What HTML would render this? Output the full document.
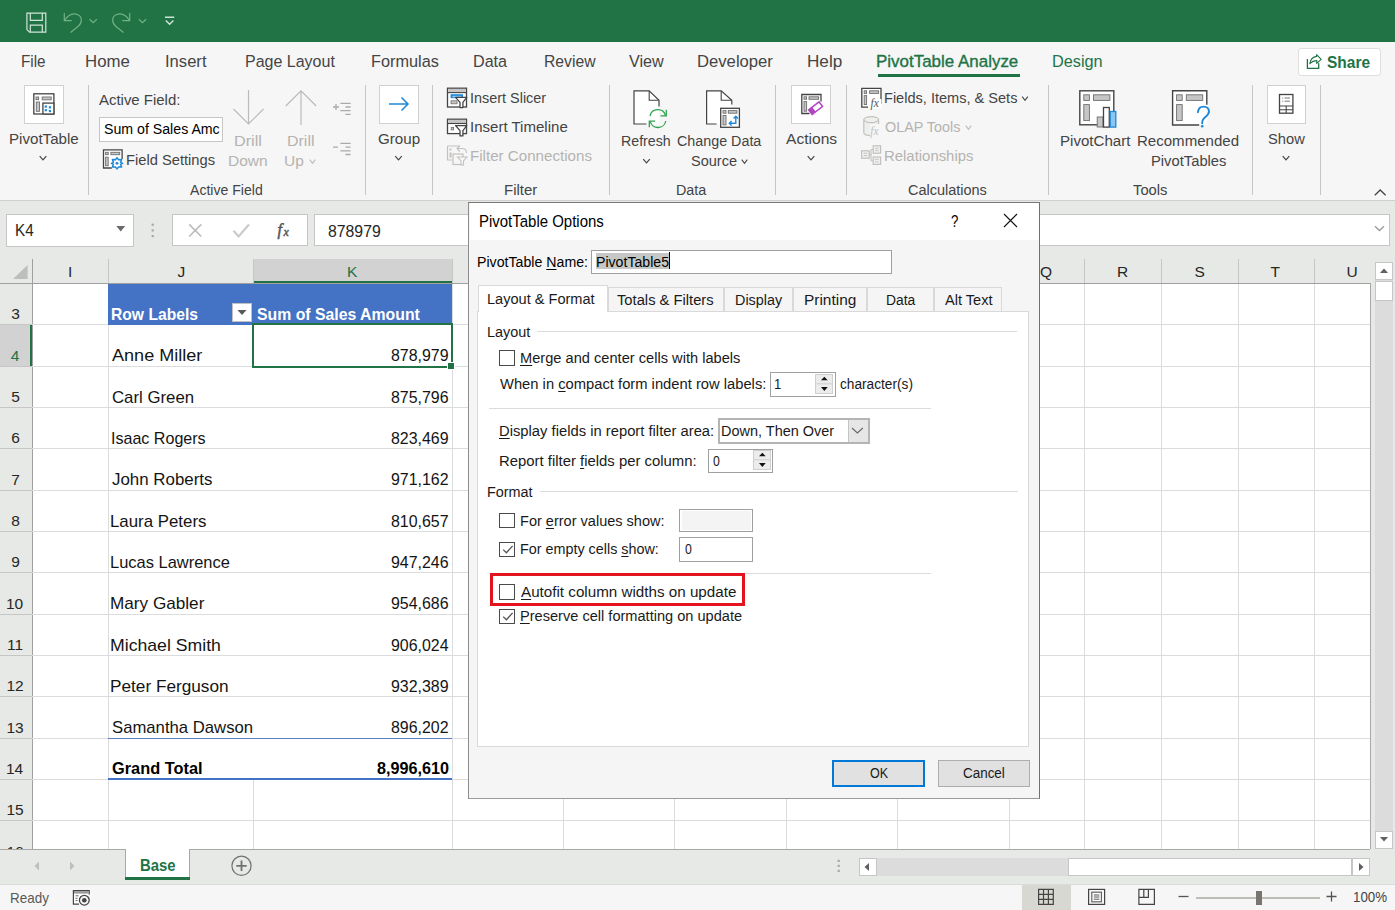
<!DOCTYPE html>
<html><head><meta charset="utf-8"><style>
html,body{margin:0;padding:0;}
body{width:1395px;height:910px;position:relative;overflow:hidden;background:#fff;font-family:'Liberation Sans', sans-serif;}
.t{position:absolute;white-space:nowrap;line-height:1;transform-origin:0 0;}
u{text-decoration:underline;text-decoration-thickness:1px;text-underline-offset:1.6px;}
#t0{left:20.58px !important;transform:scaleX(0.9242)}
#t1{left:85.48px !important;transform:scaleX(1.0170)}
#t2{left:165.20px !important;transform:scaleX(1.0045)}
#t3{left:244.53px !important;transform:scaleX(0.9690)}
#t4{left:370.51px !important;transform:scaleX(0.9856)}
#t5{left:473.32px !important;transform:scaleX(0.9769)}
#t6{left:543.55px !important;transform:scaleX(0.9526)}
#t7{left:629.00px !important;transform:scaleX(0.9783)}
#t8{left:697.49px !important;transform:scaleX(1.0083)}
#t9{left:807.46px !important;transform:scaleX(1.0372)}
#t10{left:876.47px !important;transform:scaleX(1.0263)}
#t11{left:1052.01px !important;transform:scaleX(0.9856)}
#t12{left:1327.00px !important;transform:scaleX(0.9544)}
#t13{left:190.20px !important;transform:scaleX(0.9437)}
#t14{left:503.90px !important;transform:scaleX(1.0034)}
#t15{left:676.14px !important;transform:scaleX(0.9609)}
#t16{left:907.80px !important;transform:scaleX(0.9700)}
#t17{left:1132.50px !important;transform:scaleX(0.9892)}
#t18{left:8.99px !important;transform:scaleX(1.0126)}
#t19{left:377.70px !important;transform:scaleX(1.0152)}
#t20{left:785.70px !important;transform:scaleX(1.0439)}
#t21{left:1267.50px !important;transform:scaleX(0.9853)}
#t22{left:98.80px !important;transform:scaleX(1.0010)}
#t23{left:103.50px !important;transform:scaleX(0.9491)}
#t24{left:125.52px !important;transform:scaleX(0.9849)}
#t25{left:234.21px !important;transform:scaleX(1.0872)}
#t26{left:228.16px !important;transform:scaleX(1.0393)}
#t27{left:287.03px !important;transform:scaleX(1.0707)}
#t28{left:284.46px !important;transform:scaleX(1.0407)}
#t29{left:469.83px !important;transform:scaleX(0.9665)}
#t30{left:469.79px !important;transform:scaleX(1.0073)}
#t31{left:469.79px !important;transform:scaleX(1.0143)}
#t32{left:621.35px !important;transform:scaleX(0.9519)}
#t33{left:677.10px !important;transform:scaleX(0.9590)}
#t34{left:690.80px !important;transform:scaleX(0.9727)}
#t35{left:884.02px !important;transform:scaleX(0.9751)}
#t36{left:885.00px !important;transform:scaleX(0.9639)}
#t37{left:884.00px !important;transform:scaleX(0.9986)}
#t38{left:1060.49px !important;transform:scaleX(1.0098)}
#t39{left:1137.29px !important;transform:scaleX(1.0081)}
#t40{left:1150.81px !important;transform:scaleX(0.9887)}
#t41{left:14.72px !important;transform:scaleX(0.9766)}
#t42{left:328.30px !important;transform:scaleX(1.0098)}
#t43{left:68.00px !important;transform:scaleX(1.0000)}
#t44{left:177.50px !important;transform:scaleX(1.0000)}
#t45{left:347.00px !important;transform:scaleX(1.0000)}
#t46{left:1040.00px !important;transform:scaleX(1.0000)}
#t47{left:1117.00px !important;transform:scaleX(1.0000)}
#t48{left:1194.50px !important;transform:scaleX(1.0000)}
#t49{left:1270.50px !important;transform:scaleX(1.0000)}
#t50{left:1346.50px !important;transform:scaleX(1.0000)}
#t51{left:11.20px !important;transform:scaleX(1.0000)}
#t52{left:10.70px !important;transform:scaleX(1.0000)}
#t53{left:11.20px !important;transform:scaleX(1.0000)}
#t54{left:11.20px !important;transform:scaleX(1.0000)}
#t55{left:11.20px !important;transform:scaleX(1.0000)}
#t56{left:11.20px !important;transform:scaleX(1.0000)}
#t57{left:11.20px !important;transform:scaleX(1.0000)}
#t58{left:5.89px !important;transform:scaleX(1.0000)}
#t59{left:6.97px !important;transform:scaleX(1.0000)}
#t60{left:6.39px !important;transform:scaleX(1.0000)}
#t61{left:6.39px !important;transform:scaleX(1.0000)}
#t62{left:5.89px !important;transform:scaleX(1.0000)}
#t63{left:6.39px !important;transform:scaleX(1.0000)}
#t64{left:6.39px !important;transform:scaleX(1.0000)}
#t65{left:111.03px !important;transform:scaleX(0.9652)}
#t66{left:257.00px !important;transform:scaleX(0.9750)}
#t67{left:111.50px !important;transform:scaleX(1.1046)}
#t68{left:391.00px !important;transform:scaleX(0.9740)}
#t69{left:111.50px !important;transform:scaleX(1.0262)}
#t70{left:391.00px !important;transform:scaleX(0.9740)}
#t71{left:110.52px !important;transform:scaleX(0.9821)}
#t72{left:391.00px !important;transform:scaleX(0.9740)}
#t73{left:111.50px !important;transform:scaleX(1.0327)}
#t74{left:391.00px !important;transform:scaleX(0.9740)}
#t75{left:110.47px !important;transform:scaleX(1.0293)}
#t76{left:391.00px !important;transform:scaleX(0.9740)}
#t77{left:110.49px !important;transform:scaleX(1.0065)}
#t78{left:391.00px !important;transform:scaleX(0.9740)}
#t79{left:110.45px !important;transform:scaleX(1.0485)}
#t80{left:391.00px !important;transform:scaleX(0.9740)}
#t81{left:110.42px !important;transform:scaleX(1.0794)}
#t82{left:391.00px !important;transform:scaleX(0.9740)}
#t83{left:110.45px !important;transform:scaleX(1.0514)}
#t84{left:391.00px !important;transform:scaleX(0.9740)}
#t85{left:111.50px !important;transform:scaleX(1.0208)}
#t86{left:391.00px !important;transform:scaleX(0.9740)}
#t87{left:111.50px !important;transform:scaleX(1.0079)}
#t88{left:376.50px !important;transform:scaleX(0.9982)}
#t89{left:140.04px !important;transform:scaleX(0.8563)}
#t90{left:9.89px !important;transform:scaleX(0.9102)}
#t91{left:1352.60px !important;transform:scaleX(0.9008)}
#t92{left:479.04px !important;transform:scaleX(0.9569)}
#t93{left:950.60px !important;transform:scaleX(0.7600)}
#t94{left:476.62px !important;transform:scaleX(0.9777)}
#t95{left:595.52px !important;transform:scaleX(0.9753)}
#t96{left:487.29px !important;transform:scaleX(1.0052)}
#t97{left:617.00px !important;transform:scaleX(1.0176)}
#t98{left:734.81px !important;transform:scaleX(0.9926)}
#t99{left:804.13px !important;transform:scaleX(1.0654)}
#t100{left:885.84px !important;transform:scaleX(0.9561)}
#t101{left:944.80px !important;transform:scaleX(1.0070)}
#t102{left:487.10px !important;transform:scaleX(0.9961)}
#t103{left:519.79px !important;transform:scaleX(1.0100)}
#t104{left:499.90px !important;transform:scaleX(1.0180)}
#t105{left:773.70px !important;transform:scaleX(0.9000)}
#t106{left:840.20px !important;transform:scaleX(0.9445)}
#t107{left:498.88px !important;transform:scaleX(1.0202)}
#t108{left:721.30px !important;transform:scaleX(0.9993)}
#t109{left:498.87px !important;transform:scaleX(1.0269)}
#t110{left:712.60px !important;transform:scaleX(0.8500)}
#t111{left:487.11px !important;transform:scaleX(0.9945)}
#t112{left:519.60px !important;transform:scaleX(1.0031)}
#t113{left:519.61px !important;transform:scaleX(0.9911)}
#t114{left:684.60px !important;transform:scaleX(0.8500)}
#t115{left:520.60px !important;transform:scaleX(1.0489)}
#t116{left:519.59px !important;transform:scaleX(1.0066)}
#t117{left:869.50px !important;transform:scaleX(0.8652)}
#t118{left:963.30px !important;transform:scaleX(0.9271)}
</style></head><body>
<div style="position:absolute;left:0px;top:0px;width:1395px;height:42px;background:#217346"></div>
<div style="position:absolute;left:0px;top:42px;width:1395px;height:159px;background:#f6f6f6"></div>
<div style="position:absolute;left:0px;top:200px;width:1395px;height:1px;background:#d2d0ce"></div>
<div id="t0" class="t" style="left:21.50px;top:54.16px;font-size:16.52px;color:#444444;font-weight:normal;">File</div>
<div id="t1" class="t" style="left:86.50px;top:54.16px;font-size:16.52px;color:#444444;font-weight:normal;">Home</div>
<div id="t2" class="t" style="left:166.20px;top:54.16px;font-size:16.52px;color:#444444;font-weight:normal;">Insert</div>
<div id="t3" class="t" style="left:245.50px;top:54.16px;font-size:16.52px;color:#444444;font-weight:normal;">Page Layout</div>
<div id="t4" class="t" style="left:371.50px;top:54.16px;font-size:16.52px;color:#444444;font-weight:normal;">Formulas</div>
<div id="t5" class="t" style="left:474.30px;top:54.16px;font-size:16.52px;color:#444444;font-weight:normal;">Data</div>
<div id="t6" class="t" style="left:544.50px;top:54.16px;font-size:16.52px;color:#444444;font-weight:normal;">Review</div>
<div id="t7" class="t" style="left:629.00px;top:54.16px;font-size:16.52px;color:#444444;font-weight:normal;">View</div>
<div id="t8" class="t" style="left:698.50px;top:54.16px;font-size:16.52px;color:#444444;font-weight:normal;">Developer</div>
<div id="t9" class="t" style="left:808.50px;top:54.16px;font-size:16.52px;color:#444444;font-weight:normal;">Help</div>
<div id="t10" class="t" style="left:877.50px;top:54.16px;font-size:16.52px;color:#217346;font-weight:normal;-webkit-text-stroke:0.35px #217346;">PivotTable Analyze</div>
<div style="position:absolute;left:877.6px;top:74.3px;width:142.7px;height:3px;background:#217346"></div>
<div id="t11" class="t" style="left:1053.00px;top:54.16px;font-size:16.52px;color:#217346;font-weight:normal;">Design</div>
<div style="position:absolute;left:1297.5px;top:47.5px;width:83.5px;height:28px;background:#fff;border:1px solid #e1dfdd;border-radius:3px;box-sizing:border-box"></div>
<div id="t12" class="t" style="left:1327.00px;top:54.00px;font-size:16.23px;color:#217346;font-weight:bold;">Share</div>
<div style="position:absolute;left:87.9px;top:85px;width:1px;height:110px;background:#c8c6c4"></div>
<div style="position:absolute;left:364.5px;top:85px;width:1px;height:110px;background:#c8c6c4"></div>
<div style="position:absolute;left:432.2px;top:85px;width:1px;height:110px;background:#c8c6c4"></div>
<div style="position:absolute;left:608.5px;top:85px;width:1px;height:110px;background:#c8c6c4"></div>
<div style="position:absolute;left:775.0px;top:85px;width:1px;height:110px;background:#c8c6c4"></div>
<div style="position:absolute;left:846.4px;top:85px;width:1px;height:110px;background:#c8c6c4"></div>
<div style="position:absolute;left:1048.0px;top:85px;width:1px;height:110px;background:#c8c6c4"></div>
<div style="position:absolute;left:1252.4px;top:85px;width:1px;height:110px;background:#c8c6c4"></div>
<div style="position:absolute;left:1319.5px;top:85px;width:1px;height:110px;background:#c8c6c4"></div>
<div id="t13" class="t" style="left:190.20px;top:182.61px;font-size:14.93px;color:#444444;font-weight:normal;">Active Field</div>
<div id="t14" class="t" style="left:504.90px;top:182.61px;font-size:14.93px;color:#444444;font-weight:normal;">Filter</div>
<div id="t15" class="t" style="left:677.10px;top:182.61px;font-size:14.93px;color:#444444;font-weight:normal;">Data</div>
<div id="t16" class="t" style="left:907.80px;top:182.61px;font-size:14.93px;color:#444444;font-weight:normal;">Calculations</div>
<div id="t17" class="t" style="left:1132.50px;top:182.61px;font-size:14.93px;color:#444444;font-weight:normal;">Tools</div>
<div style="position:absolute;left:24.1px;top:85.3px;width:39.699999999999996px;height:38.3px;background:#fff;border:1px solid #d2d0ce;box-sizing:border-box"></div>
<div style="position:absolute;left:379px;top:85.3px;width:40.19999999999999px;height:38.3px;background:#fff;border:1px solid #d2d0ce;box-sizing:border-box"></div>
<div style="position:absolute;left:791.3px;top:85.3px;width:39.700000000000045px;height:38.3px;background:#fff;border:1px solid #d2d0ce;box-sizing:border-box"></div>
<div style="position:absolute;left:1267.2px;top:85.3px;width:39.200000000000045px;height:38.3px;background:#fff;border:1px solid #d2d0ce;box-sizing:border-box"></div>
<svg style="position:absolute;left:0;top:0" width="1395" height="210" viewBox="0 0 1395 210"><path d="M26.9 13.1 H45.8 V32.2 H29.5 L26.9 29.6 Z" fill="none" stroke="#cfe5d6" stroke-width="1.2"/><path d="M30.3 13.1 V20.3 H42.3 V13.1 M30.3 32.2 V25.2 H42.3 V32.2" fill="none" stroke="#cfe5d6" stroke-width="1.2"/><path d="M64.3 13 V20.6 H71.6 M64.6 20.3 C68 15 73 12.8 77.5 14.5 C83 17 82 23.5 78 26.5 L70.5 32.5" fill="none" stroke="#6fb285" stroke-width="1.2"/><path d="M89.6 19.2 L93.2 22.6 L96.8 19.2" fill="none" stroke="#6fb285" stroke-width="1.2"/><path d="M129.7 13 V20.6 H122.4 M129.4 20.3 C126 15 121 12.8 116.5 14.5 C111 17 112 23.5 116 26.5 L123.5 32.5" fill="none" stroke="#6fb285" stroke-width="1.2"/><path d="M138.9 19.2 L142.5 22.6 L146.1 19.2" fill="none" stroke="#6fb285" stroke-width="1.2"/><path d="M165 17.3 H174.2 M165.8 20.5 L169.6 24.3 L173.4 20.5" fill="none" stroke="#cfe5d6" stroke-width="1.4"/><rect x="33.8" y="93.8" width="20.1" height="20.2" fill="#fff" stroke="#444444" stroke-width="1.3"/><rect x="36" y="97" width="2.6" height="2.6" fill="#c8c6c4" stroke="#6e6e6e" stroke-width="0.9"/><rect x="42.2" y="97" width="9" height="2.8" fill="#c8c6c4" stroke="#6e6e6e" stroke-width="0.9"/><rect x="36.3" y="102" width="3.2" height="9.3" fill="#c8c6c4" stroke="#6e6e6e" stroke-width="0.9"/><rect x="42.9" y="103.1" width="11" height="10.9" fill="#fff" stroke="#444444" stroke-width="1.3"/><rect x="44.699999999999996" y="105.5" width="2.2" height="2.2" fill="#1e88d8"/><rect x="48.8" y="106.2" width="2.2" height="2.2" fill="#1e88d8"/><rect x="44.699999999999996" y="109.10000000000001" width="2.2" height="2.2" fill="#1e88d8"/><rect x="48.8" y="109.9" width="2.2" height="2.2" fill="#1e88d8"/><path d="M122.1 159 V149.8 H103.5 V168 H111.8" fill="#fff" stroke="#444444" stroke-width="1.3"/><rect x="105.6" y="152.3" width="2.6" height="2.4" fill="#c8c6c4" stroke="#6e6e6e" stroke-width="0.9"/><rect x="110.9" y="152.3" width="8.8" height="2.4" fill="#c8c6c4" stroke="#6e6e6e" stroke-width="0.9"/><rect x="105.6" y="157.2" width="2.6" height="8.6" fill="#c8c6c4" stroke="#6e6e6e" stroke-width="0.9"/><g transform="translate(117,163.3)"><path d="M0 -5.6 L1.6 -3.6 L4.6 -3.8 L3.6 -1 L5.6 0 L3.6 1 L4.6 3.8 L1.6 3.6 L0 5.6 L-1.6 3.6 L-4.6 3.8 L-3.6 1 L-5.6 0 L-3.6 -1 L-4.6 -3.8 L-1.6 -3.6 Z" fill="#fff" stroke="#1e88d8" stroke-width="1.5" stroke-linejoin="round"/><circle r="1.4" fill="#1e88d8"/></g><path d="M248.5 90 V124 M233.5 109 L248.5 124 L263.5 109" fill="none" stroke="#bdbbb9" stroke-width="1.2"/><path d="M301 90.5 V125 M285.8 106 L301 90.8 L316.2 106" fill="none" stroke="#bdbbb9" stroke-width="1.2"/><path d="M333 107 H339 M336 104 V110 M340.4 103.3 H350.6 M345.5 107 H350.6 M340.4 110.7 H350.6 M345.5 114.4 H350.6" fill="none" stroke="#aaaaa8" stroke-width="1.3"/><path d="M333 147.1 H338 M340.4 143.4 H350.6 M345.5 147.1 H350.6 M340.4 150.9 H350.6 M345.5 154.5 H350.6" fill="none" stroke="#aaaaa8" stroke-width="1.3"/><path d="M39.7 156.2 L43 159.8 L46.3 156.2" fill="none" stroke="#444" stroke-width="1.2"/><path d="M395.2 156.2 L398.5 159.8 L401.8 156.2" fill="none" stroke="#444" stroke-width="1.2"/><path d="M807.7 156.2 L811 159.8 L814.3 156.2" fill="none" stroke="#444" stroke-width="1.2"/><path d="M1282.7 156.2 L1286 159.8 L1289.3 156.2" fill="none" stroke="#444" stroke-width="1.2"/><path d="M643.2 159.2 L646.5 162.8 L649.8 159.2" fill="none" stroke="#444" stroke-width="1.2"/><path d="M309.7 159.7 L312.5 163.3 L315.3 159.7" fill="none" stroke="#bdbbb9" stroke-width="1.1"/><path d="M741.7 159.7 L744.5 163.3 L747.3 159.7" fill="none" stroke="#444" stroke-width="1.1"/><path d="M1022.2 96.7 L1025 100.3 L1027.8 96.7" fill="none" stroke="#444" stroke-width="1.1"/><path d="M965.7 125.7 L968.5 129.3 L971.3 125.7" fill="none" stroke="#bdbbb9" stroke-width="1.1"/><path d="M389 104 H408 M401.5 97.5 L408 104 L401.5 110.5" fill="none" stroke="#1e88d8" stroke-width="1.5"/><rect x="447.5" y="88.2" width="19" height="18.8" fill="#fff" stroke="#444444" stroke-width="1.3"/><rect x="448.2" y="88.9" width="17.6" height="3.4" fill="#c8c6c4" stroke="none"/><path d="M447.5 92.6 H466.5" stroke="#444444" stroke-width="1.1"/><rect x="450.6" y="94.2" width="12.4" height="4" fill="#1e88d8"/><rect x="452.4" y="95.8" width="9" height="1.6" fill="#8cc4ee"/><rect x="451" y="100.8" width="6" height="3" fill="#c8c6c4" stroke="#6e6e6e" stroke-width="0.8"/><path d="M455.6 97.4 H466.8 L462.9 102.4 V107.6 H460 V102.4 Z" fill="#fff" stroke="#444444" stroke-width="1.3" stroke-linejoin="round"/><rect x="447.5" y="119.2" width="19" height="14.4" fill="#fff" stroke="#444444" stroke-width="1.3"/><rect x="448.2" y="119.9" width="17.6" height="3.4" fill="#c8c6c4"/><path d="M447.5 123.5 H466.5" stroke="#444444" stroke-width="1.1"/><rect x="451.2" y="127.5" width="2.4" height="2.4" fill="#c8c6c4" stroke="#6e6e6e" stroke-width="0.8"/><path d="M455.6 125.6 H466.8 L462.9 130.6 V135.9 H460 V130.6 Z" fill="#fff" stroke="#444444" stroke-width="1.3" stroke-linejoin="round"/><path d="M447.5 146 H459 M447.5 146 V160 H452" fill="none" stroke="#c3c1bf" stroke-width="1.2"/><rect x="449.5" y="148.5" width="2" height="2" fill="#c3c1bf"/><rect x="449.5" y="152.5" width="2" height="5" fill="#c3c1bf"/><path d="M460 145.5 L457 148.5 L460 151.5 M457.5 148.5 H462 C465 148.5 466.5 150.5 466.5 153" fill="none" stroke="#c3c1bf" stroke-width="1.1"/><rect x="453" y="154" width="10" height="10.5" fill="#f6f6f6" stroke="#c3c1bf" stroke-width="1.2"/><path d="M457.5 157 H467 L463.5 161 V165 H461 V161 Z" fill="#f6f6f6" stroke="#c3c1bf" stroke-width="1.1"/><path d="M634 90.9 H649.2 L659 100.2 V124 H634 Z" fill="#fff" stroke="none"/><path d="M646.5 124 H634 V90.9 H649.2 L659 100.2 V106.6" fill="none" stroke="#444444" stroke-width="1.2"/><path d="M649.2 90.9 V100.2 H659" fill="none" stroke="#444444" stroke-width="1.1"/><path d="M650 116 A8 8 0 0 1 665.5 115.5 M665.8 121 A8 8 0 0 1 650.2 121.5" fill="none" stroke="#2ea44f" stroke-width="1.3"/><path d="M666.3 109.8 V115.8 H660.5 M649.3 127.3 V121.2 H655.2" fill="none" stroke="#2ea44f" stroke-width="1.3"/><path d="M706.6 90.9 H721.2 L731.8 100.2 V124 H706.6 Z" fill="#fff" stroke="none"/><path d="M716.6 124 H706.6 V90.9 H721.2 L731.8 100.2 V104.5" fill="none" stroke="#444444" stroke-width="1.2"/><path d="M721.2 90.9 V100.2 H731.8" fill="none" stroke="#444444" stroke-width="1.1"/><rect x="720.7" y="108.3" width="18.7" height="19" fill="#fff" stroke="#444444" stroke-width="1.3"/><rect x="723" y="110.6" width="3" height="2.6" fill="#c8c6c4" stroke="#6e6e6e" stroke-width="0.9"/><rect x="728.3" y="110.6" width="8.6" height="2.6" fill="#c8c6c4" stroke="#6e6e6e" stroke-width="0.9"/><rect x="723" y="115.5" width="3" height="9.4" fill="#c8c6c4" stroke="#6e6e6e" stroke-width="0.9"/><path d="M735.8 116.5 V123.2 H729.5 M733.6 118.6 L735.8 116.3 L738 118.6 M731.6 121 L729.3 123.2 L731.6 125.4" fill="none" stroke="#1e88d8" stroke-width="1.4"/><path d="M821 101.5 V94.5 H801.8 V113.5 H809.5" fill="#fff" stroke="#444444" stroke-width="1.3"/><rect x="804" y="96.8" width="2.6" height="2.5" fill="#c8c6c4" stroke="#6e6e6e" stroke-width="0.9"/><rect x="809" y="96.8" width="9.6" height="2.5" fill="#c8c6c4" stroke="#6e6e6e" stroke-width="0.9"/><rect x="804" y="101.6" width="2.6" height="9.6" fill="#c8c6c4" stroke="#6e6e6e" stroke-width="0.9"/><g transform="translate(815.6,108.2) rotate(-38)"><rect x="-6.6" y="-2.9" width="13.2" height="5.8" fill="#fff" stroke="#b146c2" stroke-width="1.5"/><rect x="-6.6" y="-2.9" width="4.6" height="5.8" fill="#b146c2"/></g><path d="M881 104 V88.4 H861.8 V107.2 H868" fill="#fff" stroke="#444444" stroke-width="1.3"/><rect x="864.2" y="90.8" width="2.4" height="2.6" fill="#c8c6c4" stroke="#6e6e6e" stroke-width="0.9"/><rect x="869.6" y="90.8" width="9" height="2.6" fill="#c8c6c4" stroke="#6e6e6e" stroke-width="0.9"/><rect x="864.2" y="95.6" width="2.4" height="9" fill="#c8c6c4" stroke="#6e6e6e" stroke-width="0.9"/><rect x="869" y="99" width="12.5" height="9.5" fill="#fff"/><text x="870.5" y="106.8" font-family="Liberation Serif" font-style="italic" font-size="11.5" fill="#555">fx</text><path d="M863.8 119.6 V132.5 C863.8 136.6 878.6 136.6 878.6 132.5 V119.6" fill="#eef0ee" stroke="#c3c1bf" stroke-width="1.2"/><ellipse cx="871.2" cy="119.6" rx="7.4" ry="3" fill="#eef0ee" stroke="#c3c1bf" stroke-width="1.2"/><rect x="870" y="124" width="12" height="13" fill="#f6f6f6"/><text x="870.3" y="135" font-family="Liberation Serif" font-style="italic" font-size="11.5" fill="#c3c1bf">fx</text><rect x="861.6" y="150.8" width="7.6" height="7.4" fill="#eef0ee" stroke="#c3c1bf" stroke-width="1.2"/><rect x="873.2" y="145.8" width="7.4" height="7.4" fill="#eef0ee" stroke="#c3c1bf" stroke-width="1.2"/><rect x="873.2" y="157" width="7.4" height="7.4" fill="#eef0ee" stroke="#c3c1bf" stroke-width="1.2"/><path d="M863.6 153.2 H867.2 M863.6 155.6 H867.2 M875.2 148.3 H878.6 M875.2 150.6 H878.6 M875.2 159.4 H878.6 M875.2 161.8 H878.6" stroke="#c3c1bf" stroke-width="0.9"/><path d="M869.2 154.5 H871 M871 149.5 V160.7 M871 149.5 H873.2 M871 160.7 H873.2" fill="none" stroke="#c3c1bf" stroke-width="1.1"/><rect x="1079.8" y="90.8" width="34" height="34" fill="#fff" stroke="#444444" stroke-width="1.4"/><rect x="1083.8" y="94.8" width="5.6" height="5.6" fill="#c8c6c4" stroke="#6e6e6e" stroke-width="0.9"/><rect x="1093.5" y="94.8" width="16.4" height="5.6" fill="#c8c6c4" stroke="#6e6e6e" stroke-width="0.9"/><rect x="1083.8" y="104.6" width="5.6" height="16" fill="#c8c6c4" stroke="#6e6e6e" stroke-width="0.9"/><rect x="1097.2" y="117" width="5.8" height="10" fill="#c8c6c4" stroke="#6e6e6e" stroke-width="0.9"/><rect x="1103.5" y="107.5" width="5.8" height="19.6" fill="#fff" stroke="#444444" stroke-width="1.3"/><rect x="1110.2" y="111.5" width="5.6" height="15.6" fill="#8ec5f0" stroke="#1e88d8" stroke-width="1.3"/><rect x="1172.6" y="90.8" width="34.2" height="34.2" fill="#fff"/><path d="M1206.8 104.8 V90.8 H1172.6 V125 H1199.2" fill="none" stroke="#444444" stroke-width="1.4"/><rect x="1176.6" y="94.8" width="5.6" height="5.6" fill="#c8c6c4" stroke="#6e6e6e" stroke-width="0.9"/><rect x="1186.3" y="94.8" width="16.4" height="5.6" fill="#c8c6c4" stroke="#6e6e6e" stroke-width="0.9"/><rect x="1176.6" y="104.6" width="5.6" height="16" fill="#c8c6c4" stroke="#6e6e6e" stroke-width="0.9"/><path d="M1197.9 112.2 C1198.3 108.3 1200.8 106.6 1203.6 106.6 C1206.8 106.6 1209 108.8 1209 111.6 C1209 114.6 1206.5 116 1204.4 117.8 C1202.9 119.1 1202.2 120.5 1202.2 123.4" fill="none" stroke="#1e88d8" stroke-width="1.9" stroke-linecap="round"/><circle cx="1202.2" cy="126.3" r="1.3" fill="#1e88d8"/><rect x="1279.5" y="94.5" width="13.4" height="18.7" fill="#fff" stroke="#444444" stroke-width="1.3"/><path d="M1279.5 106 H1293 M1279.5 109.7 H1293 M1286.2 106 V113" stroke="#444444" stroke-width="1.1"/><path d="M1282.3 98 H1283.3 M1284.6 98 H1290 M1282.3 101.2 H1283.3 M1284.6 101.2 H1290" stroke="#777" stroke-width="1"/><path d="M1374.8 195.3 L1380.2 190 L1385.6 195.3" fill="none" stroke="#444" stroke-width="1.3"/><path d="M1307.4 59 V68.3 H1318.7 V63.2" fill="none" stroke="#217346" stroke-width="1.3"/><path d="M1309.8 63.6 C1310.6 59 1313.2 56.8 1316.6 56.4 V54.6 L1321.2 59.4 L1316.8 63.4 V60.6 C1314.2 60.4 1312 61.4 1309.8 63.6 Z" fill="none" stroke="#217346" stroke-width="1.1" stroke-linejoin="round"/></svg>
<div id="t18" class="t" style="left:10.00px;top:131.61px;font-size:14.93px;color:#444444;font-weight:normal;">PivotTable</div>
<div id="t19" class="t" style="left:377.70px;top:131.61px;font-size:14.93px;color:#444444;font-weight:normal;">Group</div>
<div id="t20" class="t" style="left:785.70px;top:131.61px;font-size:14.93px;color:#444444;font-weight:normal;">Actions</div>
<div id="t21" class="t" style="left:1267.50px;top:131.61px;font-size:14.93px;color:#444444;font-weight:normal;">Show</div>
<div id="t22" class="t" style="left:98.80px;top:92.91px;font-size:14.93px;color:#444444;font-weight:normal;">Active Field:</div>
<div style="position:absolute;left:99.3px;top:116.5px;width:123.7px;height:25.8px;background:#fff;border:1px solid #c8c6c4;box-sizing:border-box"></div>
<div id="t23" class="t" style="left:103.50px;top:122.31px;font-size:14.93px;color:#000;font-weight:normal;">Sum of Sales Amc</div>
<div id="t24" class="t" style="left:126.50px;top:152.71px;font-size:14.93px;color:#444444;font-weight:normal;">Field Settings</div>
<div id="t25" class="t" style="left:235.30px;top:133.71px;font-size:14.93px;color:#b5b3b0;font-weight:normal;">Drill</div>
<div id="t26" class="t" style="left:229.20px;top:153.61px;font-size:14.93px;color:#b5b3b0;font-weight:normal;">Down</div>
<div id="t27" class="t" style="left:288.10px;top:133.71px;font-size:14.93px;color:#b5b3b0;font-weight:normal;">Drill</div>
<div id="t28" class="t" style="left:285.50px;top:153.61px;font-size:14.93px;color:#b5b3b0;font-weight:normal;">Up</div>
<div id="t29" class="t" style="left:470.80px;top:91.21px;font-size:14.93px;color:#444444;font-weight:normal;">Insert Slicer</div>
<div id="t30" class="t" style="left:470.80px;top:120.21px;font-size:14.93px;color:#444444;font-weight:normal;">Insert Timeline</div>
<div id="t31" class="t" style="left:470.80px;top:149.21px;font-size:14.93px;color:#b5b3b0;font-weight:normal;">Filter Connections</div>
<div id="t32" class="t" style="left:622.30px;top:133.71px;font-size:14.93px;color:#444444;font-weight:normal;">Refresh</div>
<div id="t33" class="t" style="left:677.10px;top:133.71px;font-size:14.93px;color:#444444;font-weight:normal;">Change Data</div>
<div id="t34" class="t" style="left:690.80px;top:153.61px;font-size:14.93px;color:#444444;font-weight:normal;">Source</div>
<div id="t35" class="t" style="left:885.00px;top:91.21px;font-size:14.93px;color:#444444;font-weight:normal;">Fields, Items, &amp; Sets</div>
<div id="t36" class="t" style="left:885.00px;top:120.21px;font-size:14.93px;color:#b5b3b0;font-weight:normal;">OLAP Tools</div>
<div id="t37" class="t" style="left:885.00px;top:149.21px;font-size:14.93px;color:#b5b3b0;font-weight:normal;">Relationships</div>
<div id="t38" class="t" style="left:1061.50px;top:133.71px;font-size:14.93px;color:#444444;font-weight:normal;">PivotChart</div>
<div id="t39" class="t" style="left:1138.30px;top:133.71px;font-size:14.93px;color:#444444;font-weight:normal;">Recommended</div>
<div id="t40" class="t" style="left:1151.80px;top:153.61px;font-size:14.93px;color:#444444;font-weight:normal;">PivotTables</div>
<div style="position:absolute;left:0px;top:201px;width:1395px;height:82px;background:#e6e9e5"></div>
<div style="position:absolute;left:6px;top:214px;width:128px;height:33px;background:#fff;border:1px solid #c6c6c6;box-sizing:border-box"></div>
<div id="t41" class="t" style="left:15.70px;top:223.30px;font-size:15.65px;color:#262626;font-weight:normal;">K4</div>
<div style="position:absolute;left:172.2px;top:214.2px;width:136.2px;height:31.6px;background:#fff;border:1px solid #c6c6c6;box-sizing:border-box"></div>
<div style="position:absolute;left:313.9px;top:214.3px;width:1076.5px;height:31.5px;background:#fff;border:1px solid #c6c6c6;box-sizing:border-box"></div>
<div id="t42" class="t" style="left:328.30px;top:223.50px;font-size:15.65px;color:#262626;font-weight:normal;">878979</div>
<svg style="position:absolute;left:0px;top:200px;" width="400" height="50" viewBox="0 200 400 50"><path d="M116.3 226 H125.2 L120.75 231.6 Z" fill="#6a6a6a"/><rect x="151.6" y="223.6" width="2.2" height="2.2" fill="#a8a8a8"/><rect x="151.6" y="229.3" width="2.2" height="2.2" fill="#a8a8a8"/><rect x="151.6" y="235" width="2.2" height="2.2" fill="#a8a8a8"/><path d="M189.2 224.4 L201.3 236.5 M201.3 224.4 L189.2 236.5" stroke="#bcbcbc" stroke-width="1.6"/><path d="M233.5 230.8 L238.6 236.4 L249 224.6" fill="none" stroke="#cacaca" stroke-width="2.2"/><text x="277.5" y="235" font-family="Liberation Serif" font-style="italic" font-size="16" fill="#555" stroke="#555" stroke-width="0.5">f</text><text x="283.6" y="235.5" font-family="Liberation Serif" font-style="italic" font-size="12" fill="#555" stroke="#555" stroke-width="0.4">x</text></svg>
<svg style="position:absolute;left:1370px;top:220px;" width="20" height="16" viewBox="0 0 20 16"><path d="M5 6.2 L9.5 10.5 L14 6.2" fill="none" stroke="#9a9a9a" stroke-width="1.3"/></svg>
<div style="position:absolute;left:32px;top:259px;width:1338px;height:24px;background:#e6e9e5"></div>
<div style="position:absolute;left:253px;top:259px;width:199px;height:24px;background:#d2d2d2"></div>
<div style="position:absolute;left:253px;top:281px;width:199px;height:2px;background:#217346"></div>
<div style="position:absolute;left:0px;top:283px;width:1370px;height:1px;background:#a0a0a0"></div>
<div style="position:absolute;left:108px;top:259px;width:1px;height:24px;background:#c6c6c6"></div>
<div style="position:absolute;left:1084px;top:259px;width:1px;height:24px;background:#c6c6c6"></div>
<div style="position:absolute;left:1161px;top:259px;width:1px;height:24px;background:#c6c6c6"></div>
<div style="position:absolute;left:1237.6px;top:259px;width:1px;height:24px;background:#c6c6c6"></div>
<div style="position:absolute;left:1313.7px;top:259px;width:1px;height:24px;background:#c6c6c6"></div>
<div style="position:absolute;left:253px;top:259px;width:1px;height:24px;background:#c6c6c6"></div>
<div style="position:absolute;left:452px;top:259px;width:1px;height:24px;background:#c6c6c6"></div>
<svg style="position:absolute;left:0px;top:259px;" width="32" height="24" viewBox="0 259 32 24"><path d="M27.6 265 V279 H13 Z" fill="#bdbfbc"/></svg>
<div id="t43" class="t" style="left:70.00px;top:263.82px;font-size:15.51px;color:#262626;font-weight:normal;">I</div>
<div id="t44" class="t" style="left:181.00px;top:263.82px;font-size:15.51px;color:#262626;font-weight:normal;">J</div>
<div id="t45" class="t" style="left:353.00px;top:263.82px;font-size:15.51px;color:#217346;font-weight:normal;">K</div>
<div id="t46" class="t" style="left:1046.00px;top:263.82px;font-size:15.51px;color:#262626;font-weight:normal;">Q</div>
<div id="t47" class="t" style="left:1123.00px;top:263.82px;font-size:15.51px;color:#262626;font-weight:normal;">R</div>
<div id="t48" class="t" style="left:1199.50px;top:263.82px;font-size:15.51px;color:#262626;font-weight:normal;">S</div>
<div id="t49" class="t" style="left:1275.50px;top:263.82px;font-size:15.51px;color:#262626;font-weight:normal;">T</div>
<div id="t50" class="t" style="left:1352.00px;top:263.82px;font-size:15.51px;color:#262626;font-weight:normal;">U</div>
<div style="position:absolute;left:32px;top:284px;width:1338px;height:565px;background:#fff"></div>
<div style="position:absolute;left:0px;top:284px;width:32px;height:565px;background:#e6e9e5"></div>
<div style="position:absolute;left:31.5px;top:259px;width:1px;height:590px;background:#a0a0a0"></div>
<div style="position:absolute;left:32px;top:324px;width:1338px;height:1px;background:#dadcdd"></div>
<div style="position:absolute;left:0px;top:324px;width:32px;height:1px;background:#c6c6c6"></div>
<div style="position:absolute;left:32px;top:366px;width:1338px;height:1px;background:#dadcdd"></div>
<div style="position:absolute;left:0px;top:366px;width:32px;height:1px;background:#c6c6c6"></div>
<div style="position:absolute;left:32px;top:407px;width:1338px;height:1px;background:#dadcdd"></div>
<div style="position:absolute;left:0px;top:407px;width:32px;height:1px;background:#c6c6c6"></div>
<div style="position:absolute;left:32px;top:448px;width:1338px;height:1px;background:#dadcdd"></div>
<div style="position:absolute;left:0px;top:448px;width:32px;height:1px;background:#c6c6c6"></div>
<div style="position:absolute;left:32px;top:490px;width:1338px;height:1px;background:#dadcdd"></div>
<div style="position:absolute;left:0px;top:490px;width:32px;height:1px;background:#c6c6c6"></div>
<div style="position:absolute;left:32px;top:531px;width:1338px;height:1px;background:#dadcdd"></div>
<div style="position:absolute;left:0px;top:531px;width:32px;height:1px;background:#c6c6c6"></div>
<div style="position:absolute;left:32px;top:572px;width:1338px;height:1px;background:#dadcdd"></div>
<div style="position:absolute;left:0px;top:572px;width:32px;height:1px;background:#c6c6c6"></div>
<div style="position:absolute;left:32px;top:614px;width:1338px;height:1px;background:#dadcdd"></div>
<div style="position:absolute;left:0px;top:614px;width:32px;height:1px;background:#c6c6c6"></div>
<div style="position:absolute;left:32px;top:655px;width:1338px;height:1px;background:#dadcdd"></div>
<div style="position:absolute;left:0px;top:655px;width:32px;height:1px;background:#c6c6c6"></div>
<div style="position:absolute;left:32px;top:696px;width:1338px;height:1px;background:#dadcdd"></div>
<div style="position:absolute;left:0px;top:696px;width:32px;height:1px;background:#c6c6c6"></div>
<div style="position:absolute;left:32px;top:738px;width:1338px;height:1px;background:#dadcdd"></div>
<div style="position:absolute;left:0px;top:738px;width:32px;height:1px;background:#c6c6c6"></div>
<div style="position:absolute;left:32px;top:779px;width:1338px;height:1px;background:#dadcdd"></div>
<div style="position:absolute;left:0px;top:779px;width:32px;height:1px;background:#c6c6c6"></div>
<div style="position:absolute;left:32px;top:820px;width:1338px;height:1px;background:#dadcdd"></div>
<div style="position:absolute;left:0px;top:820px;width:32px;height:1px;background:#c6c6c6"></div>
<div style="position:absolute;left:32px;top:862px;width:1338px;height:1px;background:#dadcdd"></div>
<div style="position:absolute;left:0px;top:862px;width:32px;height:1px;background:#c6c6c6"></div>
<div style="position:absolute;left:108px;top:284px;width:1px;height:565px;background:#dadcdd"></div>
<div style="position:absolute;left:452px;top:284px;width:1px;height:565px;background:#dadcdd"></div>
<div style="position:absolute;left:563px;top:284px;width:1px;height:565px;background:#dadcdd"></div>
<div style="position:absolute;left:674px;top:284px;width:1px;height:565px;background:#dadcdd"></div>
<div style="position:absolute;left:786px;top:284px;width:1px;height:565px;background:#dadcdd"></div>
<div style="position:absolute;left:897px;top:284px;width:1px;height:565px;background:#dadcdd"></div>
<div style="position:absolute;left:1009px;top:284px;width:1px;height:565px;background:#dadcdd"></div>
<div style="position:absolute;left:1084px;top:284px;width:1px;height:565px;background:#dadcdd"></div>
<div style="position:absolute;left:1161px;top:284px;width:1px;height:565px;background:#dadcdd"></div>
<div style="position:absolute;left:1238px;top:284px;width:1px;height:565px;background:#dadcdd"></div>
<div style="position:absolute;left:1314px;top:284px;width:1px;height:565px;background:#dadcdd"></div>
<div style="position:absolute;left:253px;top:779px;width:1px;height:70px;background:#dadcdd"></div>
<div style="position:absolute;left:1369.5px;top:283px;width:1px;height:566px;background:#a8a8a8"></div>
<div style="position:absolute;left:0px;top:325px;width:31px;height:41px;background:#d2d2d2"></div>
<div style="position:absolute;left:30px;top:325px;width:2px;height:41px;background:#217346"></div>
<div id="t51" class="t" style="left:15.20px;top:306.42px;font-size:15.51px;color:#262626;font-weight:normal;">3</div>
<div id="t52" class="t" style="left:15.20px;top:347.75px;font-size:15.51px;color:#217346;font-weight:normal;">4</div>
<div id="t53" class="t" style="left:15.20px;top:389.08px;font-size:15.51px;color:#262626;font-weight:normal;">5</div>
<div id="t54" class="t" style="left:15.20px;top:430.41px;font-size:15.51px;color:#262626;font-weight:normal;">6</div>
<div id="t55" class="t" style="left:15.20px;top:471.74px;font-size:15.51px;color:#262626;font-weight:normal;">7</div>
<div id="t56" class="t" style="left:15.20px;top:513.07px;font-size:15.51px;color:#262626;font-weight:normal;">8</div>
<div id="t57" class="t" style="left:15.20px;top:554.40px;font-size:15.51px;color:#262626;font-weight:normal;">9</div>
<div id="t58" class="t" style="left:15.20px;top:595.73px;font-size:15.51px;color:#262626;font-weight:normal;">10</div>
<div id="t59" class="t" style="left:15.20px;top:637.06px;font-size:15.51px;color:#262626;font-weight:normal;">11</div>
<div id="t60" class="t" style="left:15.20px;top:678.39px;font-size:15.51px;color:#262626;font-weight:normal;">12</div>
<div id="t61" class="t" style="left:15.20px;top:719.72px;font-size:15.51px;color:#262626;font-weight:normal;">13</div>
<div id="t62" class="t" style="left:15.20px;top:761.05px;font-size:15.51px;color:#262626;font-weight:normal;">14</div>
<div id="t63" class="t" style="left:15.20px;top:802.38px;font-size:15.51px;color:#262626;font-weight:normal;">15</div>
<div id="t64" class="t" style="left:15.20px;top:843.71px;font-size:15.51px;color:#262626;font-weight:normal;">16</div>
<div style="position:absolute;left:108px;top:284px;width:344px;height:41px;background:#4472c4"></div>
<div id="t65" class="t" style="left:112.00px;top:306.10px;font-size:16.23px;color:#fff;font-weight:bold;">Row Labels</div>
<div style="position:absolute;left:231.8px;top:302.5px;width:20.7px;height:19.9px;background:#fff;border:1px solid #c0c0c0;box-sizing:border-box"></div>
<svg style="position:absolute;left:236px;top:309px;" width="12" height="7" viewBox="0 0 12 7"><path d="M1.5 1 L10.5 1 L6 6 Z" fill="#595959"/></svg>
<div id="t66" class="t" style="left:257.00px;top:306.10px;font-size:16.23px;color:#fff;font-weight:bold;">Sum of Sales Amount</div>
<div id="t67" class="t" style="left:111.50px;top:347.31px;font-size:16.38px;color:#141414;font-weight:normal;">Anne Miller</div>
<div id="t68" class="t" style="left:448.50px;top:347.31px;font-size:16.38px;color:#141414;font-weight:normal;">878,979</div>
<div id="t69" class="t" style="left:111.50px;top:388.64px;font-size:16.38px;color:#141414;font-weight:normal;">Carl Green</div>
<div id="t70" class="t" style="left:448.50px;top:388.64px;font-size:16.38px;color:#141414;font-weight:normal;">875,796</div>
<div id="t71" class="t" style="left:111.50px;top:429.97px;font-size:16.38px;color:#141414;font-weight:normal;">Isaac Rogers</div>
<div id="t72" class="t" style="left:448.50px;top:429.97px;font-size:16.38px;color:#141414;font-weight:normal;">823,469</div>
<div id="t73" class="t" style="left:111.50px;top:471.30px;font-size:16.38px;color:#141414;font-weight:normal;">John Roberts</div>
<div id="t74" class="t" style="left:448.50px;top:471.30px;font-size:16.38px;color:#141414;font-weight:normal;">971,162</div>
<div id="t75" class="t" style="left:111.50px;top:512.63px;font-size:16.38px;color:#141414;font-weight:normal;">Laura Peters</div>
<div id="t76" class="t" style="left:448.50px;top:512.63px;font-size:16.38px;color:#141414;font-weight:normal;">810,657</div>
<div id="t77" class="t" style="left:111.50px;top:553.96px;font-size:16.38px;color:#141414;font-weight:normal;">Lucas Lawrence</div>
<div id="t78" class="t" style="left:448.50px;top:553.96px;font-size:16.38px;color:#141414;font-weight:normal;">947,246</div>
<div id="t79" class="t" style="left:111.50px;top:595.29px;font-size:16.38px;color:#141414;font-weight:normal;">Mary Gabler</div>
<div id="t80" class="t" style="left:448.50px;top:595.29px;font-size:16.38px;color:#141414;font-weight:normal;">954,686</div>
<div id="t81" class="t" style="left:111.50px;top:636.62px;font-size:16.38px;color:#141414;font-weight:normal;">Michael Smith</div>
<div id="t82" class="t" style="left:448.50px;top:636.62px;font-size:16.38px;color:#141414;font-weight:normal;">906,024</div>
<div id="t83" class="t" style="left:111.50px;top:677.95px;font-size:16.38px;color:#141414;font-weight:normal;">Peter Ferguson</div>
<div id="t84" class="t" style="left:448.50px;top:677.95px;font-size:16.38px;color:#141414;font-weight:normal;">932,389</div>
<div id="t85" class="t" style="left:111.50px;top:719.28px;font-size:16.38px;color:#141414;font-weight:normal;">Samantha Dawson</div>
<div id="t86" class="t" style="left:448.50px;top:719.28px;font-size:16.38px;color:#141414;font-weight:normal;">896,202</div>
<div style="position:absolute;left:108px;top:737.5px;width:344px;height:1px;background:#5b7fc0"></div>
<div style="position:absolute;left:108px;top:777.5px;width:344px;height:2px;background:#4472c4"></div>
<div id="t87" class="t" style="left:111.50px;top:760.40px;font-size:16.23px;color:#000;font-weight:bold;">Grand Total</div>
<div id="t88" class="t" style="left:448.50px;top:760.40px;font-size:16.23px;color:#000;font-weight:bold;">8,996,610</div>
<div style="position:absolute;left:252px;top:323.4px;width:201px;height:44.2px;border:2.2px solid #217346;box-sizing:border-box"></div>
<div style="position:absolute;left:447.1px;top:362.2px;width:8px;height:8px;background:#217346;border:1px solid #fff;box-sizing:border-box"></div>
<div style="position:absolute;left:1370.5px;top:259px;width:24.5px;height:590px;background:#e6e9e5"></div>
<div style="position:absolute;left:1375px;top:262px;width:17.5px;height:588px;background:#dcdcdc"></div>
<div style="position:absolute;left:1375px;top:262.4px;width:17.5px;height:17.5px;background:#fff;border:1px solid #c6c6c6;box-sizing:border-box"></div>
<svg style="position:absolute;left:1378px;top:266px;" width="12" height="9" viewBox="0 0 12 9"><path d="M2 7 L6 2.5 L10 7 Z" fill="#606060"/></svg>
<div style="position:absolute;left:1375px;top:281px;width:17.5px;height:20px;background:#fff;border:1px solid #c6c6c6;box-sizing:border-box"></div>
<div style="position:absolute;left:1375px;top:831px;width:17.5px;height:17.5px;background:#fff;border:1px solid #c6c6c6;box-sizing:border-box"></div>
<svg style="position:absolute;left:1378px;top:835px;" width="12" height="9" viewBox="0 0 12 9"><path d="M2 2 L6 6.5 L10 2 Z" fill="#606060"/></svg>
<div style="position:absolute;left:0px;top:849px;width:1395px;height:35px;background:#e6e9e5"></div>
<div style="position:absolute;left:0px;top:848.5px;width:1370px;height:1px;background:#a8a8a8"></div>
<div style="position:absolute;left:125.4px;top:848.5px;width:64.3px;height:31.3px;background:#fff;border-left:1px solid #a8a8a8;border-right:1px solid #a8a8a8;box-sizing:border-box"></div>
<div style="position:absolute;left:125.4px;top:877px;width:64.3px;height:2.8px;background:#217346"></div>
<div id="t89" class="t" style="left:140.90px;top:857.02px;font-size:17.39px;color:#217346;font-weight:bold;">Base</div>
<svg style="position:absolute;left:30px;top:858px;" width="50" height="16" viewBox="0 0 50 16"><path d="M9 3.5 L4.5 8 L9 12.5 Z" fill="#bfbfbf"/><path d="M40 3.5 L44.5 8 L40 12.5 Z" fill="#bfbfbf"/></svg>
<svg style="position:absolute;left:230px;top:854px;" width="24" height="24" viewBox="0 0 24 24"><circle cx="11.5" cy="11.8" r="9.6" fill="none" stroke="#707070" stroke-width="1.2"/><path d="M11.5 6.5 V17 M6.3 11.8 H16.7" stroke="#707070" stroke-width="1.8"/></svg>
<svg style="position:absolute;left:830px;top:855px;" width="14" height="22" viewBox="830 855 14 22"><rect x="837.6" y="859.8" width="2.2" height="2.2" fill="#a8a8a8"/><rect x="837.6" y="864.8" width="2.2" height="2.2" fill="#a8a8a8"/><rect x="837.6" y="869.8" width="2.2" height="2.2" fill="#a8a8a8"/></svg>
<div style="position:absolute;left:858.8px;top:858px;width:511.2px;height:18px;background:#dcdcdc"></div>
<div style="position:absolute;left:858.8px;top:858px;width:18px;height:18px;background:#fff;border:1px solid #c6c6c6;box-sizing:border-box"></div>
<svg style="position:absolute;left:861px;top:861px;" width="12" height="12" viewBox="0 0 12 12"><path d="M8 2 L3.5 6 L8 10 Z" fill="#606060"/></svg>
<div style="position:absolute;left:1067.8px;top:858px;width:284.2px;height:18px;background:#fff;border:1px solid #c6c6c6;box-sizing:border-box"></div>
<div style="position:absolute;left:1352px;top:858px;width:18px;height:18px;background:#fff;border:1px solid #c6c6c6;box-sizing:border-box"></div>
<svg style="position:absolute;left:1355px;top:861px;" width="12" height="12" viewBox="0 0 12 12"><path d="M4 2 L8.5 6 L4 10 Z" fill="#606060"/></svg>
<div style="position:absolute;left:0px;top:884px;width:1395px;height:26px;background:#f6f6f6"></div>
<div style="position:absolute;left:0px;top:884px;width:1395px;height:1px;background:#dadada"></div>
<div id="t90" class="t" style="left:10.80px;top:890.83px;font-size:14.78px;color:#595959;font-weight:normal;">Ready</div>
<div style="position:absolute;left:1021.7px;top:885px;width:49.5px;height:25px;background:#d8d8d2"></div>
<svg style="position:absolute;left:1030px;top:884px;" width="140" height="26" viewBox="1030 884 140 26"><path d="M1038.6 889.4 H1053.3 V904.3 H1038.6 Z M1043.5 889.4 V904.3 M1048.4 889.4 V904.3 M1038.6 894.4 H1053.3 M1038.6 899.3 H1053.3" fill="none" stroke="#444" stroke-width="1.2"/><rect x="1088.6" y="889.4" width="16" height="15" fill="none" stroke="#444" stroke-width="1.2"/><rect x="1091.8" y="892.2" width="9.6" height="9.6" fill="#fff" stroke="#666" stroke-width="1.2"/><path d="M1093.8 895 H1099.4 M1093.8 897 H1099.4 M1093.8 899.2 H1099.4" stroke="#444" stroke-width="0.9"/><path d="M1138.9 889.4 H1154.4 V904.3 H1138.9 Z M1143.8 889.4 V897.4 M1148.4 889.4 V897.4 H1138.9" fill="none" stroke="#444" stroke-width="1.2"/></svg>
<svg style="position:absolute;left:66px;top:884px;" width="30" height="26" viewBox="66 884 30 26"><path d="M89.2 894.5 V890.6 H73.4 V904.1 H79" fill="#fff" stroke="#444" stroke-width="1.2"/><rect x="74" y="891.2" width="14.6" height="2.4" fill="#999"/><path d="M75.5 895.8 H78.5 M75.5 898.3 H77.5 M75.5 900.6 H77.5" stroke="#555" stroke-width="0.9"/><circle cx="84.3" cy="900.2" r="4.9" fill="#f6f6f6" stroke="#444" stroke-width="1.3"/><circle cx="84.3" cy="900.2" r="2.3" fill="#444"/></svg>
<div id="t91" class="t" style="left:1353.50px;top:890.43px;font-size:14.78px;color:#444;font-weight:normal;">100%</div>
<div style="position:absolute;left:1195.7px;top:897px;width:124.3px;height:1.5px;background:#bdbdb6"></div>
<div style="position:absolute;left:1255.6px;top:891.2px;width:6px;height:14px;background:#78746f"></div>
<svg style="position:absolute;left:1176px;top:890px;" width="14" height="12" viewBox="0 0 14 12"><path d="M2.5 6.5 H12.5" stroke="#555" stroke-width="1.3"/></svg>
<svg style="position:absolute;left:1324px;top:890px;" width="14" height="12" viewBox="0 0 14 12"><path d="M2.5 6.5 H12.5 M7.5 1.5 V11.5" stroke="#555" stroke-width="1.3"/></svg>
<div style="position:absolute;left:468.2px;top:201.6px;width:572px;height:597px;background:#f5f5f5;border-style:solid;border-width:1.5px 1.4px 1.6px 1.8px;border-color:#787878 #707070 #9a9a9a #8c8c8c;box-sizing:border-box"></div>
<div style="position:absolute;left:470px;top:203px;width:568.8px;height:37.2px;background:#fff"></div>
<div id="t92" class="t" style="left:480.00px;top:213.90px;font-size:15.65px;color:#000;font-weight:normal;">PivotTable Options</div>
<div id="t93" class="t" style="left:950.60px;top:212.82px;font-size:17.39px;color:#000;font-weight:normal;">?</div>
<svg style="position:absolute;left:1002px;top:212px;" width="17" height="17" viewBox="0 0 17 17"><path d="M2 2 L15 15 M15 2 L2 15" stroke="#111" stroke-width="1.1"/></svg>
<div id="t94" class="t" style="left:477.60px;top:254.98px;font-size:14.49px;color:#000;font-weight:normal;">PivotTable <u>N</u>ame:</div>
<div style="position:absolute;left:591.3px;top:249.5px;width:300.4px;height:24.1px;background:#fff;border:1px solid #a0a0a0;box-sizing:border-box"></div>
<div style="position:absolute;left:596.3px;top:253px;width:72.5px;height:16px;background:#c5c8c5"></div>
<div id="t95" class="t" style="left:596.50px;top:254.98px;font-size:14.49px;color:#000;font-weight:normal;">PivotTable5</div>
<div style="position:absolute;left:669px;top:252px;width:1px;height:17px;background:#000"></div>
<div style="position:absolute;left:608px;top:287.3px;width:115.70000000000005px;height:25px;background:#f5f5f5;border:1px solid #d9d9d9;border-bottom:none;box-sizing:border-box"></div>
<div style="position:absolute;left:723.7px;top:287.3px;width:69.29999999999995px;height:25px;background:#f5f5f5;border:1px solid #d9d9d9;border-bottom:none;box-sizing:border-box"></div>
<div style="position:absolute;left:793px;top:287.3px;width:73.60000000000002px;height:25px;background:#f5f5f5;border:1px solid #d9d9d9;border-bottom:none;box-sizing:border-box"></div>
<div style="position:absolute;left:866.6px;top:287.3px;width:67.39999999999998px;height:25px;background:#f5f5f5;border:1px solid #d9d9d9;border-bottom:none;box-sizing:border-box"></div>
<div style="position:absolute;left:934px;top:287.3px;width:68px;height:25px;background:#f5f5f5;border:1px solid #d9d9d9;border-bottom:none;box-sizing:border-box"></div>
<div style="position:absolute;left:477px;top:311px;width:551.5px;height:436.2px;background:#fff;border:1px solid #d9d9d9;box-sizing:border-box"></div>
<div style="position:absolute;left:477.6px;top:284.6px;width:130.4px;height:27.4px;background:#fff;border:1px solid #d9d9d9;border-bottom:none;box-sizing:border-box"></div>
<div id="t96" class="t" style="left:488.30px;top:292.38px;font-size:14.49px;color:#1a1a1a;font-weight:normal;">Layout &amp; Format</div>
<div id="t97" class="t" style="left:617.00px;top:293.28px;font-size:14.49px;color:#1a1a1a;font-weight:normal;">Totals &amp; Filters</div>
<div id="t98" class="t" style="left:735.80px;top:293.28px;font-size:14.49px;color:#1a1a1a;font-weight:normal;">Display</div>
<div id="t99" class="t" style="left:805.20px;top:293.28px;font-size:14.49px;color:#1a1a1a;font-weight:normal;">Printing</div>
<div id="t100" class="t" style="left:886.80px;top:293.28px;font-size:14.49px;color:#1a1a1a;font-weight:normal;">Data</div>
<div id="t101" class="t" style="left:944.80px;top:293.28px;font-size:14.49px;color:#1a1a1a;font-weight:normal;">Alt Text</div>
<div id="t102" class="t" style="left:488.10px;top:325.28px;font-size:14.49px;color:#1a1a1a;font-weight:normal;">Layout</div>
<div style="position:absolute;left:537.4px;top:331px;width:480px;height:1px;background:#dcdcdc"></div>
<div style="position:absolute;left:499.4px;top:350.2px;width:15.8px;height:15.4px;background:#fff;border:1.3px solid #4a4a4a;box-sizing:border-box"></div>
<div id="t103" class="t" style="left:520.80px;top:351.48px;font-size:14.49px;color:#1a1a1a;font-weight:normal;"><u>M</u>erge and center cells with labels</div>
<div id="t104" class="t" style="left:499.90px;top:377.48px;font-size:14.49px;color:#1a1a1a;font-weight:normal;">When in <u>c</u>ompact form indent row labels:</div>
<div style="position:absolute;left:769.9px;top:372.3px;width:65.7px;height:24.3px;background:#fff;border:1px solid #a0a0a0;box-sizing:border-box"></div>
<div style="position:absolute;left:815px;top:374px;width:18.4px;height:20px;background:#ececec;border:1px solid #cfcfcf;box-sizing:border-box"></div>
<svg style="position:absolute;left:815px;top:374px;" width="19" height="20" viewBox="815 374 19 20"><path d="M821 380.3 L827.7 380.3 L824.35 376.8 Z M821 386.9 L827.7 386.9 L824.35 390.9 Z" fill="#111"/><path d="M816 383.8 H832.4" stroke="#cfcfcf" stroke-width="1"/></svg>
<div id="t105" class="t" style="left:774.60px;top:377.48px;font-size:14.49px;color:#1a1a1a;font-weight:normal;">1</div>
<div id="t106" class="t" style="left:840.20px;top:377.48px;font-size:14.49px;color:#1a1a1a;font-weight:normal;">character(s)</div>
<div style="position:absolute;left:488.5px;top:407.5px;width:442.5px;height:1px;background:#dcdcdc"></div>
<div id="t107" class="t" style="left:499.90px;top:423.58px;font-size:14.49px;color:#1a1a1a;font-weight:normal;"><u>D</u>isplay fields in report filter area:</div>
<div style="position:absolute;left:717.6px;top:417.8px;width:152px;height:26.2px;background:#fff;border:2px solid #b4b4b4;box-sizing:border-box"></div>
<div style="position:absolute;left:847.5px;top:419.8px;width:20.1px;height:22.2px;background:#e6e6e6;border-left:1px solid #c4c4c4;box-sizing:border-box"></div>
<svg style="position:absolute;left:845px;top:420px;" width="25" height="22" viewBox="845 420 25 22"><path d="M852 428 L857.4 433 L862.8 428" fill="none" stroke="#666" stroke-width="1.1"/></svg>
<div id="t108" class="t" style="left:722.30px;top:423.58px;font-size:14.49px;color:#1a1a1a;font-weight:normal;">Down, Then Over</div>
<div id="t109" class="t" style="left:499.90px;top:453.98px;font-size:14.49px;color:#1a1a1a;font-weight:normal;">Report filter <u>f</u>ields per column:</div>
<div style="position:absolute;left:707.5px;top:448.8px;width:65.7px;height:23.9px;background:#fff;border:1px solid #a0a0a0;box-sizing:border-box"></div>
<div style="position:absolute;left:752.6px;top:450.4px;width:18.4px;height:20px;background:#ececec;border:1px solid #cfcfcf;box-sizing:border-box"></div>
<svg style="position:absolute;left:752.6px;top:450.4px;" width="19" height="20" viewBox="752.6 450.4 19 20"><path d="M758.6 456.7 L765.3000000000001 456.7 L761.95 453.2 Z M758.6 463.29999999999995 L765.3000000000001 463.29999999999995 L761.95 467.29999999999995 Z" fill="#111"/><path d="M753.6 460.2 H770.0" stroke="#cfcfcf" stroke-width="1"/></svg>
<div id="t110" class="t" style="left:712.60px;top:453.98px;font-size:14.49px;color:#1a1a1a;font-weight:normal;">0</div>
<div id="t111" class="t" style="left:488.10px;top:485.18px;font-size:14.49px;color:#1a1a1a;font-weight:normal;">Format</div>
<div style="position:absolute;left:540px;top:491px;width:478px;height:1px;background:#dcdcdc"></div>
<div style="position:absolute;left:499.4px;top:512.5px;width:15.8px;height:15.4px;background:#fff;border:1.3px solid #4a4a4a;box-sizing:border-box"></div>
<div id="t112" class="t" style="left:520.60px;top:513.78px;font-size:14.49px;color:#1a1a1a;font-weight:normal;">For <u>e</u>rror values show:</div>
<div style="position:absolute;left:678.9px;top:508.7px;width:74.1px;height:23.6px;background:#fff;border:1px solid #a0a0a0;box-sizing:border-box"></div>
<div style="position:absolute;left:681.5px;top:511.3px;width:69px;height:18.4px;background:#f4f4f4"></div>
<div style="position:absolute;left:499.4px;top:541.5px;width:15.8px;height:15.4px;background:#fff;border:1.3px solid #4a4a4a;box-sizing:border-box"></div>
<svg style="position:absolute;left:499.6px;top:541.7px;" width="16" height="15" viewBox="0 0 16 15"><path d="M3.2 7.6 L6.4 10.8 L12.6 3.9" fill="none" stroke="#555" stroke-width="1.3"/></svg>
<div id="t113" class="t" style="left:520.60px;top:542.48px;font-size:14.49px;color:#1a1a1a;font-weight:normal;">For empty cells <u>s</u>how:</div>
<div style="position:absolute;left:678.9px;top:537.3px;width:74.1px;height:24.3px;background:#fff;border:1px solid #a0a0a0;box-sizing:border-box"></div>
<div id="t114" class="t" style="left:684.60px;top:542.48px;font-size:14.49px;color:#1a1a1a;font-weight:normal;">0</div>
<div style="position:absolute;left:488.5px;top:572.5px;width:442.5px;height:1px;background:#dcdcdc"></div>
<div style="position:absolute;left:499.4px;top:584.3px;width:15.8px;height:15.4px;background:#fff;border:1.3px solid #4a4a4a;box-sizing:border-box"></div>
<div id="t115" class="t" style="left:520.60px;top:585.28px;font-size:14.49px;color:#1a1a1a;font-weight:normal;"><u>A</u>utofit column widths on update</div>
<div style="position:absolute;left:499.4px;top:608.8px;width:15.8px;height:15.4px;background:#fff;border:1.3px solid #4a4a4a;box-sizing:border-box"></div>
<svg style="position:absolute;left:499.6px;top:609px;" width="16" height="15" viewBox="0 0 16 15"><path d="M3.2 7.6 L6.4 10.8 L12.6 3.9" fill="none" stroke="#555" stroke-width="1.3"/></svg>
<div id="t116" class="t" style="left:520.60px;top:608.78px;font-size:14.49px;color:#1a1a1a;font-weight:normal;"><u>P</u>reserve cell formatting on update</div>
<div style="position:absolute;left:489.5px;top:573.4px;width:255.1px;height:32.3px;border:3px solid #e3141d;box-sizing:border-box"></div>
<div style="position:absolute;left:832.4px;top:760px;width:92.6px;height:26.8px;background:#e1e1e1;border:2px solid #0078d7;box-sizing:border-box"></div>
<div style="position:absolute;left:937.9px;top:760px;width:92.1px;height:26.8px;background:#e1e1e1;border:1px solid #adadad;box-sizing:border-box"></div>
<div id="t117" class="t" style="left:869.50px;top:766.48px;font-size:14.49px;color:#1a1a1a;font-weight:normal;">OK</div>
<div id="t118" class="t" style="left:963.30px;top:766.48px;font-size:14.49px;color:#1a1a1a;font-weight:normal;">Cancel</div>
</body></html>
